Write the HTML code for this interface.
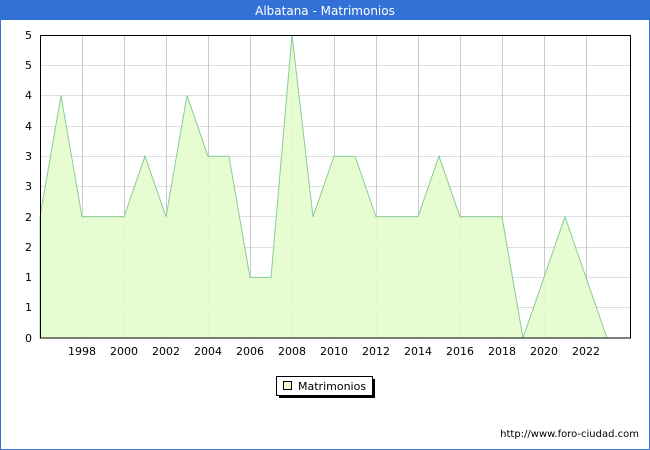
<html><body style="margin:0;width:650px;height:450px;overflow:hidden;font-family:'DejaVu Sans','Liberation Sans',sans-serif">
<svg width="650" height="450" xmlns="http://www.w3.org/2000/svg" font-family="DejaVu Sans, Liberation Sans, sans-serif">
<rect x="0" y="0" width="650" height="450" fill="#fff" stroke="#3272d6" stroke-width="2"/>
<rect x="0" y="0" width="650" height="20" fill="#3272d6"/>
<text x="325" y="15" fill="#fff" font-size="12" text-anchor="middle">Albatana - Matrimonios</text>
<g stroke="#ddd" stroke-width="1">
<line x1="40" x2="630" y1="65.5" y2="65.5"/><line x1="40" x2="630" y1="95.5" y2="95.5"/><line x1="40" x2="630" y1="126.5" y2="126.5"/><line x1="40" x2="630" y1="156.5" y2="156.5"/><line x1="40" x2="630" y1="186.5" y2="186.5"/><line x1="40" x2="630" y1="216.5" y2="216.5"/><line x1="40" x2="630" y1="247.5" y2="247.5"/><line x1="40" x2="630" y1="277.5" y2="277.5"/><line x1="40" x2="630" y1="307.5" y2="307.5"/>
</g>
<g stroke="#ccc"><line x1="82.5" x2="82.5" y1="35" y2="338"/><line x1="124.5" x2="124.5" y1="35" y2="338"/><line x1="166.5" x2="166.5" y1="35" y2="338"/><line x1="208.5" x2="208.5" y1="35" y2="338"/><line x1="250.5" x2="250.5" y1="35" y2="338"/><line x1="292.5" x2="292.5" y1="35" y2="338"/><line x1="334.5" x2="334.5" y1="35" y2="338"/><line x1="376.5" x2="376.5" y1="35" y2="338"/><line x1="418.5" x2="418.5" y1="35" y2="338"/><line x1="460.5" x2="460.5" y1="35" y2="338"/><line x1="502.5" x2="502.5" y1="35" y2="338"/><line x1="544.5" x2="544.5" y1="35" y2="338"/><line x1="586.5" x2="586.5" y1="35" y2="338"/></g>
<polygon fill="#e6fccc" fill-opacity="0.9" stroke="#88cc99" stroke-width="1" points="40,338 40,216.8 61,95.6 82,216.8 103,216.8 124,216.8 145,156.2 166,216.8 187,95.6 208,156.2 229,156.2 250,277.4 271,277.4 292,35 313,216.8 334,156.2 355,156.2 376,216.8 397,216.8 418,216.8 439,156.2 460,216.8 481,216.8 502,216.8 523,338 544,277.4 565,216.8 586,277.4 607,338"/>
<rect x="40.5" y="35.5" width="590" height="302.5" fill="none" stroke="#000"/>
<g font-size="11" fill="#000" text-anchor="end">
<text x="32" y="39">5</text><text x="32" y="69">5</text><text x="32" y="99">4</text><text x="32" y="130">4</text><text x="32" y="160">3</text><text x="32" y="190">3</text><text x="32" y="221">2</text><text x="32" y="251">2</text><text x="32" y="281">1</text><text x="32" y="311">1</text><text x="32" y="342">0</text>
</g>
<g font-size="11" fill="#000" text-anchor="middle">
<text x="82" y="355">1998</text><text x="124" y="355">2000</text><text x="166" y="355">2002</text><text x="208" y="355">2004</text><text x="250" y="355">2006</text><text x="292" y="355">2008</text><text x="334" y="355">2010</text><text x="376" y="355">2012</text><text x="418" y="355">2014</text><text x="460" y="355">2016</text><text x="502" y="355">2018</text><text x="544" y="355">2020</text><text x="586" y="355">2022</text>
</g>
<rect x="279" y="379" width="96" height="19" fill="#000"/>
<rect x="276.5" y="376.5" width="96" height="19" fill="#fff" stroke="#000"/>
<rect x="283.5" y="381.5" width="8" height="8" fill="#e6fccc" stroke="#000"/>
<text x="298" y="390" font-size="11">Matrimonios</text>
<text x="639" y="437" font-size="10" text-anchor="end">http://www.foro-ciudad.com</text>
</svg>
</body></html>
